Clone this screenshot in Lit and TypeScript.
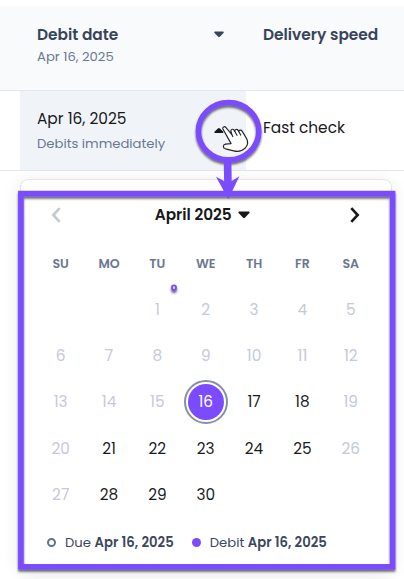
import { LitElement, html, css } from "lit";
import { customElement } from "lit/decorators.js";
import { classMap } from "lit/directives/class-map.js";

const WEEKDAYS = ["SU", "MO", "TU", "WE", "TH", "FR", "SA"];
const OPEN_DAYS = new Set([17, 18, 21, 22, 23, 24, 25, 28, 29, 30]);

@customElement("date-calendar")
export class DateCalendar extends LitElement {
  static styles = css`
    :host { display: block; box-sizing: border-box; height: 391px; background: #fff; border: 1px solid #e2e5ec; border-radius: 8px; box-shadow: 0 4px 18px rgba(40, 40, 50, 0.11); padding: 19.5px 16px 0 15.5px; }
    .month { display: flex; align-items: center; justify-content: space-between; height: 30px; padding: 0 14px 0 13.5px; }
    .title { display: flex; align-items: center; gap: 6.5px; font-size: 15.3px; font-weight: 600; color: #17181b; margin-left: -6px; }
    svg { display: block; }
    .weekdays, .days { display: grid; grid-template-columns: repeat(7, 48.35px); text-align: center; }
    .weekdays { margin-top: 23.5px; height: 22px; line-height: 22px; font-size: 12.6px; font-weight: 600; color: #6b7790; }
    .days { margin-top: 11.2px; grid-auto-rows: 46.25px; font-size: 15.3px; color: #1b1c1f; }
    .day { display: flex; align-items: center; justify-content: center; }
    .muted { color: #c4cad8; }
    .ring { box-sizing: border-box; width: 44px; height: 44px; flex: none; border: 2px solid #8390a8; border-radius: 50%; padding: 2px; display: flex; }
    .disc { flex: 1; border-radius: 50%; background: #7a4bff; color: #fff; display: flex; align-items: center; justify-content: center; }
    .legend { display: flex; align-items: center; height: 20px; margin-top: 15.5px; padding-left: 10.5px; font-size: 13.2px; color: #3b475e; white-space: pre; }
    .legend b { font-weight: 600; }
    .dot { box-sizing: border-box; width: 9px; height: 9px; border-radius: 50%; margin-right: 9px; }
    .due { border: 2px solid #64748f; }
    .debit { background: #7a4bff; margin-left: 18px; }
    .l1, .l2 { letter-spacing: 0.03px; }
  `;

  render() {
    return html`
      <div class="month">
        <svg width="12" height="16" viewBox="0 0 12 16" fill="none" stroke="#c3cad5" stroke-width="2.6"><path d="M9.7 1.2 3.3 8l6.4 6.8"/></svg>
        <div class="title"><span>April 2025</span><svg width="12" height="8" viewBox="0 0 12 8" fill="#17181b"><path d="M1.2.5h9.6c.9 0 1.2.8.6 1.4L7.1 6.6c-.7.7-1.5.7-2.2 0L.6 1.9C0 1.300.3.5 1.200.5z"/></svg></div>
        <svg width="12" height="16" viewBox="0 0 12 16" fill="none" stroke="#17181b" stroke-width="2.6"><path d="M2.300 1.200 8.700 8l-6.400 6.800"/></svg>
      </div>
      <div class="weekdays">${WEEKDAYS.map((d) => html`<span>${d}</span>`)}</div>
      <div class="days">
        <span></span><span></span>
        ${Array.from({ length: 30 }, (_, i) => i + 1).map((n) => n === 16
          ? html`<span class="day"><span class="ring"><span class="disc">16</span></span></span>`
          : html`<span class=${classMap({ day: true, muted: !OPEN_DAYS.has(n) })}>${n}</span>`)}
      </div>
      <div class="legend"><i class="dot due"></i><span class="l1">Due <b>Apr 16, 2025</b></span><i class="dot debit"></i><span class="l2">Debit <b>Apr 16, 2025</b></span></div>
    `;
  }
}

@customElement("app-root")
export class AppRoot extends LitElement {
  static styles = css`
    :host { display: block; position: relative; width: 404px; height: 579px; overflow: hidden; background: #fff; font-family: Poppins, Inter, sans-serif; padding-top: 6px; box-sizing: border-box; }
    .head, .row { display: grid; grid-template-columns: 226px 1fr; padding-left: 20px; box-sizing: border-box; border-bottom: 1px solid #e1e5ee; }
    .head { height: 85px; background: #f9fafc; color: #38445b; }
    .row { height: 80px; color: #17181b; }
    .cell { padding: 17px 0 0 17px; position: relative; }
    .row .cell { padding-top: 16px; }
    .row .date { background: #f0f4f8; }
    .title { font-size: 15.4px; line-height: 23px; font-weight: 600; }
    .value { font-size: 15.4px; line-height: 23px; }
    .sub { font-size: 13.2px; line-height: 20px; color: #6b7894; }
    .head .sub { margin-top: 0.5px; }
    .row .sub { margin-top: 4px; }
    .row .speed { padding-top: 25px; }
    .caret { position: absolute; left: 193.5px; top: 25px; }
    .panel { margin: 8px 12px 0 20px; }
    .marks { position: absolute; inset: 0; }
  `;

  render() {
    return html`
      <div class="head">
        <div class="cell"><div class="title">Debit date</div><div class="sub">Apr 16, 2025</div>
          <svg class="caret" width="10" height="7" viewBox="0 0 10 7" fill="#38445b"><path d="M1 .5h8c.8 0 1.100.8.5 1.400L6 5.500c-.7.7-1.300.7-2 0L.5 1.900C-.1 1.300.2.5 1 .5z"/></svg></div>
        <div class="cell"><div class="title">Delivery speed</div></div>
      </div>
      <div class="row">
        <div class="cell date"><div class="value">Apr 16, 2025</div><div class="sub">Debits immediately</div></div>
        <div class="cell speed"><div class="value">Fast check</div></div>
      </div>
      <date-calendar class="panel"></date-calendar>
      <svg class="marks" width="404" height="579" viewBox="0 0 404 579" fill="none">
        <defs><filter id="s" filterUnits="userSpaceOnUse" x="0" y="0" width="404" height="579"><feDropShadow dx="0" dy="2.200" stdDeviation="0.900" flood-color="#000" flood-opacity="0.600"/></filter></defs>
        <path d="M215.200 132.900c-1 0-1.200-.8-.5-1.400l3.200-3c.7-.7 1.300-.7 2 0l3.200 3c.6.6.4 1.400-.5 1.400z" fill="#17181b"/>
        <g stroke="#24252a" stroke-width="1.200" stroke-linejoin="round" stroke-linecap="round">
          <path fill="#fff" d="M222.900 129c-.8-1.900 1.600-3 2.900-1.700l5.900 7-.8-3.400c.1-1.900 2.400-2.200 3.200-.7l.6 1.100c0-1.900 2.400-2.500 3.400-.9l.6 1.100c.2-1.700 2.500-2 3.400-.4l4.600 7.700c1.700 3.500.8 6.900-1.600 9.300-3 2.900-7.200 3.800-11.300 2.700l-8.400-2c-2.900-.9-2.600-4.100.1-4.700l5.600-.5z"/>
          <path d="m231.700 134.300 1.100 2.200M234.700 131.300l2.300 4M238.700 131.500l2 3.500"/>
        </g>
        <g filter="url(#s)"><ellipse cx="228.600" cy="131.200" rx="30.200" ry="28.700" stroke="#7a4bff" stroke-width="5.600"/></g>
        <g filter="url(#s)"><path d="M20.900 193.600h371.700v373.100H20.900z" stroke="#7a4bff" stroke-width="5.600"/></g>
        <path d="M223.700 161h7.700l.3 20 7.700-4.800-11.100 23L216 176.800l8.100 4.200z" fill="#7a4bff"/>
        <g filter="url(#s)"><rect x="172" y="285.300" width="4" height="4.700" rx="1.900" stroke="#7a4bff" stroke-width="1.800" fill="#d8d2ee"/></g>
      </svg>
    `;
  }
}
